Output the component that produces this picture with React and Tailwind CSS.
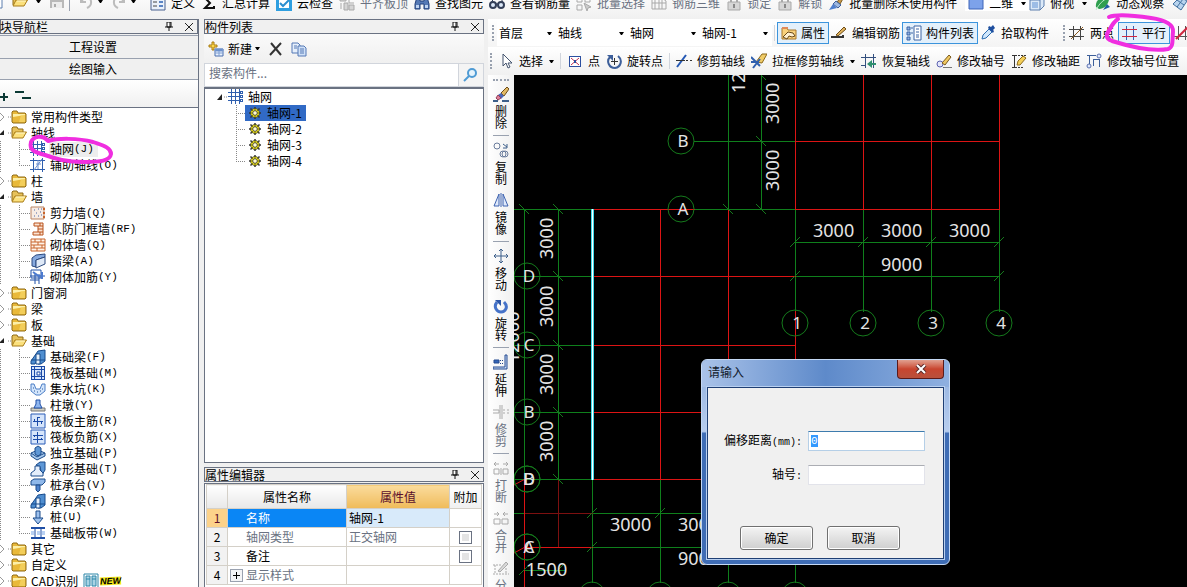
import React, { useEffect, useRef } from 'react';

const B = '#2f5fae';
const G = '#a9a9a9';

const icons = {
  folder: (
    <>
      <path d="M1 4V3l1-1h4l1 2h7l1 1v8l-1 1H2l-1-1z" fill="#e9b93a" stroke="#8f6a14" />
      <path d="M2 5h12v1L2 8z" fill="#fdf0a8" />
      <path d="M10 6h4v7H8z" fill="#f7d768" opacity=".7" />
    </>
  ),
  folderOpen: (
    <>
      <path d="M1 12V3l1-1h4l1 2h5v3" fill="#e7c25a" stroke="#8f6a14" />
      <path d="M1 13 4 7h11.5L12 13z" fill="#fbe07c" stroke="#a87c18" />
      <path d="M5 8h9" stroke="#fff7c8" />
    </>
  ),
  file: <path d="M2 1h9l3 3v11H2z" fill="#fff" stroke="#5c7fae" />,
  save: (
    <>
      <path d="M1 1h13l1 1v13H1z" fill="#b9b9b9" />
      <path d="M4 1h8v5H4zM3 9h10v6H3z" fill="#ececec" />
      <path d="M5 11h2v3H5z" fill="#aaa" />
    </>
  ),
  undo: <path d="M3 4v5h5M3 9c3-6 11-5 10 1 0 2-2 4-4 5" fill="none" stroke="#bcbcbc" strokeWidth="2" />,
  redo: <path d="M13 4v5H8M13 9C10 3 2 4 3 10c0 2 2 4 4 5" fill="none" stroke="#bcbcbc" strokeWidth="2" />,
  define: (
    <>
      <path d="M1 1h14v14H1z" fill="#eaf1fb" stroke="#48618f" />
      <path d="M1 1h14v3H1z" fill="#5b84c4" />
      <path d="M3 7h4M3 11h4" stroke="#444" />
      <path d="M9 6h4v2H9zM9 10h4v2H9z" fill="#5b84c4" />
    </>
  ),
  sum: <path d="M12 3H4l5 5-5 5h9v-2" fill="none" stroke="#111" strokeWidth="2" />,
  cloud: (
    <>
      <path d="M0 0h16v16H0z" fill="#2f9fe0" />
      <path d="M3 2h10v11H3z" fill="#fff" />
      <path d="m4 8 3 3 6-6" fill="none" stroke="#2b8fd0" strokeWidth="2" />
    </>
  ),
  slab: (
    <>
      <path d="M1 2h6v4H1zM5 8h4v7H5zM10 10h5v5h-5z" fill="#d5d5d5" stroke={G} />
      <path d="M10 3v5h5M2 8v6" fill="none" stroke={G} />
    </>
  ),
  binoculars: (
    <>
      <path d="M3 2h3v4h4V2h3l2 7v5h-5V9H6v5H1V9z" fill="#5579b5" stroke="#23407a" />
      <path d="M2 10h3v3H2zM11 10h3v3h-3z" fill="#bfd4f2" />
    </>
  ),
  glasses: (
    <>
      <circle cx="4" cy="10" r="3" fill="#dce8f8" stroke="#333f58" strokeWidth="2" />
      <circle cx="12" cy="10" r="3" fill="#dce8f8" stroke="#333f58" strokeWidth="2" />
      <path d="M7 9h2M2 8l3-5M14 8l-2-5" stroke="#333f58" />
    </>
  ),
  batch: (
    <>
      <path d="M1 2h5v5H1zM9 2h5v5H9zM1 10h5v5H1z" fill="none" stroke={G} />
      <path d="m8 8 7 4-3 1-1 3z" fill="#ccc" stroke={G} />
    </>
  ),
  rebar3d: <path d="M1 3h10v11H1zM4 3v11M8 3v11M1 8h14M11 3l4 3v8h-4" fill="none" stroke={G} />,
  lock: (
    <>
      <path d="M5 7V4c0-3 6-3 6 0v3" fill="none" stroke={G} strokeWidth="2" />
      <path d="M2 7h12v8H2z" fill="#d6d6d6" stroke={G} />
      <path d="M8 9v4" stroke="#888" strokeWidth="2" />
    </>
  ),
  brush: (
    <>
      <path d="m9 7 5-6 2 1-4 7z" fill="#c99a4a" stroke="#7b5a20" />
      <path d="M8 6l5 4-3 3-5-4z" fill="#9db8e2" stroke="#3e5f9a" />
      <path d="M5 9l4 4-8 2z" fill="#4f7fcf" />
    </>
  ),
  square: <path d="M1 2h14v12H1z" fill="#7da2ea" stroke="#3f64b8" />,
  cube: (
    <>
      <path d="M1 5 5 1h10v10l-4 4H1z" fill="#dbe9f8" stroke="#5c7fae" />
      <path d="M1 5h10v10M11 5l4-4" fill="none" stroke="#5c7fae" />
      <path d="M3 7h6v6H3z" fill="#9dbde6" />
    </>
  ),
  orbit: (
    <>
      <path d="M1 12C0 5 6 1 14 1c1 7-4 13-10 13z" fill="#2f9f4f" />
      <path d="M1 15C4 9 8 5 13 3" stroke="#bfeccb" fill="none" />
      <path d="m8 15 4-6 3 3z" fill="#1f5f9f" />
    </>
  ),
  diamond: <path d="M1 9 8 2l7 4-6 9zM5 5l7 5M11 4 5 12" fill="#b8d4ee" stroke="#3f6f9f" />,
  axis: (
    <>
      <g fill={B}>
        <path d="M3 0h1v15H3zM7 0h1v15H7zM11 0h1v15h-1zM0 3h12v1H0zM0 7h12v1H0zM0 11h12v1H0z" />
        <path d="M12 2h3v3h-3zM12 6h3v3h-3zM12 10h3v3h-3z" />
      </g>
      <path d="M13 3h1v1h-1zM13 7h1v1h-1zM13 11h1v1h-1z" fill="#fff" />
    </>
  ),
  axisAux: (
    <>
      <path d="M3 1h1v14H3zM12 1h1v14h-1zM0 3h15v1H0zM0 12h15v1H0z" fill={B} />
      <path d="m4 13 8-11M8 3v9M6 7h5" stroke="#6a8fd0" />
    </>
  ),
  gear: (
    <>
      <path d="M8 0v16M0 8h16M2 2l12 12M14 2 2 14" stroke="#333" strokeWidth="2" />
      <circle cx="8" cy="8" r="6" fill="#f2e61a" stroke="#333" />
      <path d="M8 2v12M2 8h12M4 4l8 8M12 4l-8 8" stroke="#5a5610" />
      <circle cx="8" cy="8" r="3" fill="#fffbd0" stroke="#333" />
    </>
  ),
  shearWall: (
    <>
      <path d="M1 2h13v12H1z" fill="#f7ece4" stroke="#b98464" />
      <path d="M4 5h1M8 4h1M6 8h1M10 7h1M4 11h1M8 11h1M11 10h1M11 4h1" stroke="#4b66a8" />
      <path d="M14 3v11" stroke="#c8642c" strokeWidth="2" strokeDasharray="2 2" />
    </>
  ),
  doorWall: (
    <>
      <path d="M4 2h9v12H3v-3h5V5H4z" fill="#fbe3d2" stroke="#b9521c" />
      <path d="M8 5h5M8 8h5M8 11h5M10 2v3M10 11v3" stroke="#b9521c" />
    </>
  ),
  brick: (
    <>
      <path d="M1 2h14v12H1z" fill="#fff3e8" stroke="#c8642c" />
      <path d="M1 5h14M1 8h14M1 11h14M5 2v3M11 2v3M8 5v3M4 8v3M12 8v3M7 11v3" stroke="#c8642c" />
    </>
  ),
  hiddenBeam: (
    <>
      <path d="m2 5 4-3 9-1v3L6 7v7l-4-1z" fill="#86a9de" stroke="#2c4a80" />
      <path d="m6 7 9-3v7l-9 4z" fill="#dfe9f7" stroke="#2c4a80" />
    </>
  ),
  masonryBar: (
    <>
      <path d="M1 1h10v8H1zM5 5v10M9 5v10M0 7h15M0 11h9" fill="none" stroke="#1f4fa6" />
      <path d="M12 3v7M3 3l7 5" stroke="#4b7ad0" strokeWidth="2" />
    </>
  ),
  beam: (
    <>
      <path d="m1 12 7-10 7-1v11l-4 3H8V9L5 15H1z" fill="#4f8ed0" stroke="#174a8c" />
      <path d="M6 5h4v10H6zM1 11h14" fill="#e8f2fc" stroke="#174a8c" />
    </>
  ),
  raft: (
    <>
      <path d="M1 1h14v14H1z" fill="#1a4aa8" />
      <path d="M2 2h2v2H2zM5 2h6v2H5zM12 2h2v2h-2zM2 5h2v6H2zM12 5h2v6h-2zM2 12h2v2H2zM5 12h6v2H5zM12 12h2v2h-2zM5 5h6v6H5z" fill="#d6e5fb" />
      <path d="M7 7h3v3H7z" fill="#fff" stroke="#1a4aa8" />
    </>
  ),
  sump: (
    <>
      <path d="M1 3h3l2 5h4l2-5h3v7l-5 4H6l-5-4z" fill="#d3e5fb" stroke="#4d7fc6" />
      <path d="M4 10h1M7 11h1M10 10h1M12 8h1M3 7h1" stroke="#25569c" />
    </>
  ),
  pier: (
    <>
      <path d="M1 11h14v3H1z" fill="#cfcfc4" stroke="#777" />
      <path d="M6 3h4v4l2 4H4l2-4z" fill="#8fb6ee" stroke="#1f4fa6" />
    </>
  ),
  raftMain: (
    <>
      <path d="M1 1h14v14H1z" fill="#d6e5fb" stroke="#2a5cb8" />
      <path d="M3 8h10v1H3zM7 4h1v9H7zM4 6h1v3H4zM11 8h1v3h-1zM8 4h2v1H8z" fill="#1a4aa8" />
    </>
  ),
  raftNeg: (
    <>
      <path d="M1 1h14v14H1z" fill="#d6e5fb" stroke="#2a5cb8" />
      <path d="M3 6h10v1H3zM3 10h10v1H3zM7 3h1v11H7zM4 6h1v2H4zM11 9h1v2h-1z" fill="#1a4aa8" />
    </>
  ),
  pad: (
    <>
      <path d="m1 8 7-3 7 3v3l-8 4-6-4z" fill="#a9cbef" stroke="#1d4d8c" />
      <path d="M5 3l3-2 3 2v6l-3 2-3-2z" fill="#5e97d6" stroke="#1d4d8c" />
      <path d="m1 8 6 4 8-4" fill="none" stroke="#1d4d8c" />
    </>
  ),
  strip: (
    <>
      <path d="m6 4 4-3h5v8l-3 5-2-8z" fill="#5e97d6" stroke="#1d4d8c" />
      <path d="M5 5h5v4l3 3v3H1v-3l4-3z" fill="#e4eefb" stroke="#1d4d8c" />
    </>
  ),
  pileCap: (
    <>
      <path d="m1 4 3-2h11v3l-3 3H1z" fill="#8fb8ea" stroke="#1d4d8c" />
      <path d="M6 8h4v5l-2 2-2-2z" fill="#4f83cc" stroke="#1d4d8c" />
    </>
  ),
  pile: (
    <>
      <path d="M6 2h4v7h3l-5 6-5-6h3z" fill="#9fc2ee" stroke="#1d4d8c" />
      <path d="M6 9h4" stroke="#1d4d8c" />
    </>
  ),
  band: (
    <>
      <path d="M1 3h14M1 13h14" stroke="#1f4fa6" strokeWidth="2" />
      <path d="M5 3v10M11 3v10" stroke="#1f4fa6" />
      <path d="M1 6h3v4H1zM7 6h3v4H7zM12 6h3v4h-3z" fill="#b9d1f3" />
    </>
  ),
  cad: (
    <>
      <path d="M1 1h14v14H1z" fill="#fff" stroke="#2d86a8" />
      <path d="M3 3h4v10H3zM9 3h4v10H9z" fill="#a7d3e4" stroke="#2d86a8" />
      <path d="M3 6h4M9 6h4" stroke="#2d86a8" />
    </>
  ),
  create: (
    <>
      <path d="M4 1h2v3h3v2H6v3H4V6H1V4h3z" fill="#fbd64a" stroke="#a87a10" />
      <path d="M7 8h8v7H7z" fill="#e9f1fc" stroke="#4b6fae" />
      <path d="M7 8h8v2H7zM7 12h8M11 10v5" fill="#5b84c4" stroke="#7f9fd4" />
    </>
  ),
  remove: <path d="M3 2l10 12M13 2 2 14" stroke="#333" strokeWidth="2" />,
  copyDoc: (
    <>
      <path d="M1 2h6l2 2v8H1z" fill="#e6effb" stroke="#5579b5" />
      <path d="M7 5h6l2 2v8H7z" fill="#cfe0f7" stroke="#5579b5" />
      <path d="M9 8h4M9 10h4M9 12h4M3 5h3M3 7h3" stroke="#5579b5" />
    </>
  ),
  search: (
    <>
      <circle cx="9" cy="6" r="4" fill="#e6f4fd" stroke="#4f9bd4" strokeWidth="2" />
      <path d="m6 9-5 5" stroke="#4f9bd4" strokeWidth="2" />
    </>
  ),
  props: (
    <>
      <path d="M1 3h5l1 2h8v9H1z" fill="#f9d27c" stroke="#a8762a" />
      <path d="M1 2h6v2H1z" fill="#e08a5a" />
      <path d="m2 12 5-5 5 1 2 3-3 1-3-1-2 3z" fill="#fff0d0" stroke="#6a4a18" />
    </>
  ),
  editRebar: (
    <>
      <path d="M0 12h12v-2" fill="none" stroke="#333" strokeWidth="2" />
      <path d="m5 10 8-8 2 2-8 7z" fill="#e0b25c" stroke="#6d4c18" />
    </>
  ),
  list: (
    <>
      <path d="M1 2h3v3H1zM1 7h3v3H1zM1 12h3v3H1z" fill="#8fb1e4" stroke="#3d64a4" />
      <path d="M8 1h7v14H8z" fill="#fff" stroke="#3d64a4" />
      <path d="M10 4h3M10 7h3M10 10h3M10 12h3M5 3h2M5 8h2" stroke="#3d64a4" />
    </>
  ),
  picker: (
    <>
      <path d="m2 14 1-4 6-6 3 3-6 6z" fill="#cfe6fb" stroke="#2d6db0" />
      <path d="m8 3 5 5 1-2-1-1 2-2-2-3-2 2-2-1z" fill="#1f4f9f" />
    </>
  ),
  twoPoint: (
    <>
      <path d="M4 1h1v14H4zM11 1h1v14h-1zM0 4h15v1H0zM0 11h15v1H0z" fill="#444" />
      <path d="M2 14 14 2" stroke="#8a5a20" />
    </>
  ),
  parallel: (
    <>
      <path d="M4 1h1v14H4zM11 1h1v14h-1z" fill="#355fb0" />
      <path d="M0 4h15v1H0zM0 11h15v1H0z" fill="#d02840" />
    </>
  ),
  angle: (
    <>
      <path d="M4 1h1v14H4zM0 11h15v1H0zM11 1h1v14h-1z" fill="#555" />
      <path d="M2 14 14 2" stroke="#d02840" strokeWidth="2" />
    </>
  ),
  pointer: <path d="M5 1v12l3-3 2 5 2-1-2-4h4z" fill="#fff" stroke="#44546e" />,
  point: (
    <>
      <path d="M2 3h12v11H2z" fill="#2b4fa0" />
      <path d="M3 4h10v9H3z" fill="#fff" />
      <path d="m4 5 8 7M12 5l-8 7" stroke="#c03050" />
      <path d="M7 7h2v3H7z" fill="#2b4fa0" />
    </>
  ),
  rotatePoint: (
    <>
      <path d="M4 4C0 8 3 15 9 15c6-1 8-8 3-12" fill="none" stroke="#3d5f9a" strokeWidth="2" />
      <path d="M1 2h6v6z" fill="#3d5f9a" />
      <path d="M8 5h1v7H8zM5 8h7v1H5z" fill="#333" />
    </>
  ),
  trimAxis: (
    <>
      <path d="M1 14 10 2" stroke="#2458b4" strokeWidth="2" />
      <path d="M0 7h9v1H0zM10 7h2v1h-2zM14 7h2v1h-2z" fill="#333" />
    </>
  ),
  frameTrim: (
    <>
      <path d="m5 9 6-8h5l-5 9z" fill="#f0cc68" stroke="#8d6a1c" />
      <path d="M0 4l9 9M2 15l7-9M0 9h8" stroke="#2f5fae" strokeWidth="2" />
    </>
  ),
  restore: (
    <>
      <path d="M4 1h1v14H4zM12 1h1v14h-1zM0 4h15v1H0zM0 12h5v1H0z" fill="#34507f" />
      <path d="m6 11 5-4v3h4v2h-4v3z" fill="#2f8f6f" />
    </>
  ),
  editNo: (
    <>
      <circle cx="4" cy="11" r="3" fill="#e4e6fb" stroke="#5c62b0" />
      <path d="m6 10 7-8 2 2-6 8z" fill="#f0c860" stroke="#7b5a20" />
      <path d="M7 14h9v1H7z" fill="#777" />
    </>
  ),
  editDist: (
    <>
      <path d="M1 2h5v1H1zM3 2h1v12H3zM1 14h5v1H1zM7 2h2v1H7zM10 2h2v1h-2zM13 2h2v1h-2zM7 14h2v1H7zM10 14h2v1h-2z" fill="#333" />
      <path d="m6 12 1-4 5-5 3 2-6 7z" fill="#f4cf58" stroke="#8d6a1c" />
    </>
  ),
  editPos: (
    <>
      <circle cx="13" cy="3" r="2" fill="#dfe6fb" stroke="#5c72b0" />
      <circle cx="3" cy="13" r="2" fill="#dfe6fb" stroke="#5c72b0" />
      <path d="M1 2h9v1H1zM3 2h1v9H3zM7 6h7v1H7zM7 6h1v7H7zM13 6h1v8h-1z" fill="#3d5f9a" />
    </>
  ),
  erase: (
    <>
      <path d="m8 7 6-6 2 2-5 7z" fill="#e2b964" stroke="#6d4c18" />
      <path d="m5 9 3-2 3 3-3 3z" fill="#4b66b8" />
      <path d="m3 12 2-3 3 3-3 2z" fill="#e27f9a" stroke="#92415a" />
      <path d="M0 15h5M9 15h7" stroke="#3d5f8a" strokeWidth="2" />
    </>
  ),
  copy: (
    <>
      <circle cx="4" cy="4" r="3" fill="none" stroke="#6a7c9c" />
      <path d="m10 2 4 3M14 2v4h-4" fill="none" stroke="#3d5f8a" />
      <circle cx="10" cy="12" r="3" fill="none" stroke="#6a7c9c" />
      <circle cx="12" cy="12" r="3" fill="none" stroke="#6a7c9c" />
    </>
  ),
  mirror: (
    <>
      <path d="M6 2v12H1zM10 2v12h5z" fill="#dfe9fb" stroke="#3d62b0" />
      <path d="M8 1v14" stroke="#3d62b0" />
    </>
  ),
  move: <path d="M8 1v14M1 8h14M6 3l2-2 2 2M6 13l2 2 2-2M3 6 1 8l2 2M13 6l2 2-2 2" fill="none" stroke="#3d5f8a" />,
  rotate: (
    <>
      <path d="M4 4C0 9 4 14 8 14s8-5 3-10" fill="none" stroke="#4572c8" strokeWidth="3" />
      <path d="M2 2h6v6z" fill="#2c56a8" />
    </>
  ),
  extend: (
    <>
      <path d="M1 6h5v3H1z" fill="#3566b8" stroke="#244a90" />
      <path d="M7 6h1v1H7zM9 6h1v1H9zM7 9h1v1H7zM9 9h1v1H9z" fill="#244a90" />
      <path d="M12 1h2v14H0v-2h12z" fill="#c9dbf6" stroke="#244a90" />
    </>
  ),
  trim: <path d="M7 1v14M9 1v14M0 6h6v3H0M10 6h2M14 6h2M10 9h2M14 9h2" fill="none" stroke={G} />,
  split: <path d="M1 9h5v5H1zM10 9h5v5h-5zM6 4H1l2-2M1 4l2 2M10 4h5l-2-2M15 4l-2 2M8 8v7" fill="none" stroke={G} />,
  merge: <path d="M1 9h6v5H1zM9 9h6v5H9zM1 4h5L4 2M6 4 4 6M15 4h-5l2-2M10 4l2 2" fill="none" stroke={G} />,
  divide: (
    <>
      <path d="M0 5h9M0 14h16M2 5v9M13 8v6" stroke={G} strokeDasharray="2 1" />
      <path d="m5 11 8-9 2 2-8 8z" fill="#d8d8d8" stroke={G} />
    </>
  ),
};

const Icon = ({ name, className = 'size-4' }) => (
  <svg viewBox="0 0 16 16" className={`${className} shrink-0`} aria-hidden="true">{icons[name]}</svg>
);

const Caret = ({ className = '' }) => (
  <svg viewBox="0 0 5 3" className={`h-[3px] w-[5px] shrink-0 ${className}`} aria-hidden="true">
    <path d="M0 0h5L3 3H2z" fill="#000" />
  </svg>
);

const Sep = () => <span className="h-4 w-px shrink-0 bg-gray-300" />;

const Grip = () => <span className="h-4 w-0 shrink-0 border-l-2 border-dotted border-gray-400" />;

const Tool = ({ icon, label, disabled, active }) => (
  <button
    type="button"
    disabled={disabled}
    className={`flex shrink-0 items-center whitespace-nowrap ${active ? 'h-[22px] gap-1 border border-[#3c94dc] bg-[#e3f0fb] px-[3px]' : 'h-4 gap-[5px]'} ${disabled ? 'text-gray-500' : ''}`}
  >
    <Icon name={icon} />
    {label}
  </button>
);

const mainTools = [
  { icon: 'define', label: '定义' },
  { icon: 'sum', label: '汇总计算' },
  { icon: 'cloud', label: '云检查' },
  { icon: 'slab', label: '平齐板顶', disabled: true },
  { icon: 'binoculars', label: '查找图元' },
  { icon: 'glasses', label: '查看钢筋量' },
  { icon: 'batch', label: '批量选择', disabled: true },
  { icon: 'rebar3d', label: '钢筋三维', disabled: true },
  { icon: 'lock', label: '锁定', disabled: true },
  { icon: 'lock', label: '解锁', disabled: true },
  { icon: 'brush', label: '批量删除未使用构件' },
];

const MainToolbar = () => (
  <header className="flex h-[19px] shrink-0 items-end overflow-hidden bg-linear-to-b from-[#fafafa] to-[#f0f0f0] pb-2">
    <div className="flex w-[150px] shrink-0 items-center">
      <Icon name="file" className="-ml-3 size-4" />
      <Icon name="folderOpen" className="ml-2 size-4" />
      <Caret className="ml-2" />
      <Icon name="save" className="ml-2 size-4" />
      <span className="ml-1 h-5 w-px bg-gray-400" />
      <Icon name="undo" className="ml-2 size-4" />
      <Caret className="ml-1" />
      <Icon name="redo" className="ml-2 size-4" />
      <Caret className="ml-1" />
    </div>
    <div className="flex shrink-0 items-center gap-[6px]">
      {mainTools.map((t) => <Tool key={t.label} {...t} />)}
    </div>
    <div className="ml-2 flex shrink-0 items-center gap-2 bg-white px-[3px]">
      <Tool icon="square" label="二维" />
      <Caret />
    </div>
    <div className="flex shrink-0 items-center gap-2">
      <Tool icon="cube" label="俯视" />
      <Caret />
      <Tool icon="orbit" label="动态观察" />
      <Icon name="diamond" />
    </div>
  </header>
);

const PanelTitle = ({ title, clipped }) => (
  <div className="flex h-[15px] shrink-0 items-center border border-gray-500 bg-[#f0f0f0] leading-[13px]">
    <h2 className={`flex-1 whitespace-nowrap ${clipped ? '-ml-px' : ''}`}>{title}</h2>
    <button type="button" aria-label="固定" className="mr-3">
      <svg viewBox="0 0 8 9" className="h-[9px] w-2"><path d="M2 0h4v5H2zM0 5h8M4 5v4M5 0v5" fill="#fff" stroke="#111" /></svg>
    </button>
    <button type="button" aria-label="关闭" className="mr-1">
      <svg viewBox="0 0 8 8" className="size-2"><path d="m0 0 8 8M8 0 0 8" stroke="#222" /></svg>
    </button>
  </div>
);

const componentTree = [
  { label: '常用构件类型' },
  {
    label: '轴线',
    items: [
      { icon: 'axis', label: '轴网', hotkey: '(J)', selected: true },
      { icon: 'axisAux', label: '辅助轴线', hotkey: '(O)' },
    ],
  },
  { label: '柱' },
  {
    label: '墙',
    items: [
      { icon: 'shearWall', label: '剪力墙', hotkey: '(Q)' },
      { icon: 'doorWall', label: '人防门框墙', hotkey: '(RF)' },
      { icon: 'brick', label: '砌体墙', hotkey: '(Q)' },
      { icon: 'hiddenBeam', label: '暗梁', hotkey: '(A)' },
      { icon: 'masonryBar', label: '砌体加筋', hotkey: '(Y)' },
    ],
  },
  { label: '门窗洞' },
  { label: '梁' },
  { label: '板' },
  {
    label: '基础',
    items: [
      { icon: 'beam', label: '基础梁', hotkey: '(F)' },
      { icon: 'raft', label: '筏板基础', hotkey: '(M)' },
      { icon: 'sump', label: '集水坑', hotkey: '(K)' },
      { icon: 'pier', label: '柱墩', hotkey: '(Y)' },
      { icon: 'raftMain', label: '筏板主筋', hotkey: '(R)' },
      { icon: 'raftNeg', label: '筏板负筋', hotkey: '(X)' },
      { icon: 'pad', label: '独立基础', hotkey: '(P)' },
      { icon: 'strip', label: '条形基础', hotkey: '(T)' },
      { icon: 'pileCap', label: '桩承台', hotkey: '(V)' },
      { icon: 'beam', label: '承台梁', hotkey: '(F)' },
      { icon: 'pile', label: '桩', hotkey: '(U)' },
      { icon: 'band', label: '基础板带', hotkey: '(W)' },
    ],
  },
  { label: '其它' },
  { label: '自定义' },
  { label: 'CAD识别', isNew: true },
];

const Branch = ({ x, width, last, outer }) => (
  <svg width={width} height="16" className="shrink-0" shapeRendering="crispEdges" aria-hidden="true">
    <path
      d={`M${x} 0V${last ? 8 : 16}M${x} 8H${width}${outer ? 'M0 0V16' : ''}`}
      stroke="#888"
      strokeDasharray="1 1"
    />
  </svg>
);

const TreeFolder = ({ label, items, isNew }) => (
  <li>
    <div className="flex h-4 items-center">
      <svg width="11" height="16" className="shrink-0" aria-hidden="true">
        {items ? <path d="M4 5v5H-1z" fill="#222" /> : <path d="m0 4 4 4-4 4" fill="#fff" stroke="#999" />}
        <path d="M8 8h3" stroke="#888" strokeDasharray="1 1" />
      </svg>
      <Icon name={items ? 'folderOpen' : 'folder'} />
      <span className="ml-1 whitespace-nowrap">{label}</span>
      {isNew && (
        <>
          <Icon name="cad" className="ml-[5px] size-4" />
          <span className="ml-px -rotate-3 bg-[#f6ea1c] font-['Liberation_Sans'] text-[9px] leading-[8px] font-bold italic">NEW</span>
        </>
      )}
    </div>
    {items && (
      <ul>
        {items.map((item, i) => (
          <li key={item.label} className="flex h-4 items-center">
            <Branch x={19} width={30} last={i === items.length - 1} outer />
            <button type="button" className="flex h-4 items-center whitespace-nowrap">
              <Icon name={item.icon} />
              <span className={`ml-[3px] flex h-[15px] items-center pr-1 pl-px ${item.selected ? 'bg-[#ededed]' : ''}`}>
                {item.label}
                <span className="font-['Liberation_Mono'] text-[11px]">{item.hotkey}</span>
              </span>
            </button>
          </li>
        ))}
      </ul>
    )}
  </li>
);

const NavPanel = () => (
  <aside className="flex w-[199px] shrink-0 flex-col border-r border-gray-500">
    <PanelTitle title="块导航栏" clipped />
    <button type="button" className="mt-px h-6 shrink-0 border-y border-gray-400 bg-[#f0f0f0] pr-3">工程设置</button>
    <button type="button" className="h-[21px] shrink-0 border-b border-gray-400 bg-[#f0f0f0] pr-3">绘图输入</button>
    <div className="flex h-[27px] shrink-0 items-center bg-linear-to-b from-white to-[#f0f0f0] pt-1">
      <button type="button" aria-label="展开">
        <svg width="8" height="12" className="block"><path d="M0 7h8M4 3v8" stroke="#0c3a35" strokeWidth="2" /></svg>
      </button>
      <button type="button" aria-label="折叠" className="ml-[7px]">
        <svg width="16" height="12" className="block"><path d="M0 2h9M7 8h9" stroke="#0c3a35" strokeWidth="2" /></svg>
      </button>
    </div>
    <ul className="min-h-0 flex-1 overflow-hidden border-t border-gray-500 bg-white pt-px">
      {componentTree.map((f) => <TreeFolder key={f.label} {...f} />)}
    </ul>
  </aside>
);

const axisNets = ['轴网-1', '轴网-2', '轴网-3', '轴网-4'];

const ComponentList = () => (
  <section className="flex min-h-0 flex-1 flex-col">
    <PanelTitle title="构件列表" />
    <div className="flex h-[29px] shrink-0 items-center bg-linear-to-b from-[#fafafa] to-[#f0f0f0] pl-1">
      <button type="button" className="flex items-center gap-1"><Icon name="create" />新建<Caret className="-ml-px" /></button>
      <button type="button" aria-label="删除" className="ml-2"><Icon name="remove" /></button>
      <button type="button" aria-label="复制" className="ml-[7px]"><Icon name="copyDoc" /></button>
    </div>
    <div className="flex h-6 shrink-0 border border-gray-300 bg-[#f4f4f4]">
      <input
        type="text"
        aria-label="搜索构件"
        placeholder="搜索构件..."
        className="min-w-0 flex-1 border-r border-gray-300 bg-white px-1 pb-1 outline-none placeholder:text-gray-500"
      />
      <button type="button" aria-label="搜索" className="flex w-6 items-center justify-center"><Icon name="search" /></button>
    </div>
    <ul className="min-h-0 flex-1 border border-t-2 border-gray-500 bg-white">
      <li className="flex h-4 items-center">
        <svg width="23" height="16" className="shrink-0" aria-hidden="true">
          <path d="M17 5v6h-5z" fill="#222" />
          <path d="M19 8h4" stroke="#888" strokeDasharray="1 1" />
        </svg>
        <Icon name="axis" />
        <span className="ml-1">轴网</span>
      </li>
      {axisNets.map((name, i) => (
        <li key={name} className="flex h-4 items-center">
          <Branch x={31} width={40} last={i === axisNets.length - 1} />
          <button type="button" className={`flex h-4 items-center gap-[6px] px-1 ${i === 0 ? 'bg-[#316ac5]' : ''}`}>
            <Icon name="gear" className="size-3" />
            {name}
          </button>
        </li>
      ))}
    </ul>
  </section>
);

const properties = [
  { name: '名称', value: '轴网-1', selected: true },
  { name: '轴网类型', value: '正交轴网', check: true, dim: true },
  { name: '备注', value: '', check: true },
  { name: '显示样式', value: '', dim: true, expandable: true },
];

const PropertyEditor = () => (
  <section className="mt-1 flex h-[120px] shrink-0 flex-col overflow-hidden">
    <PanelTitle title="属性编辑器" />
    <div className="mt-px flex-1 border-x border-t border-gray-500 bg-white px-px">
      <table className="w-full table-fixed border-collapse">
        <thead>
          <tr className="h-6">
            <th className="w-[21px] border border-[#d4d0c8] bg-linear-to-b from-white to-[#e8e8e8]" aria-label="序号" />
            <th className="border border-[#d4d0c8] bg-linear-to-b from-white to-[#e8e8e8] font-normal">属性名称</th>
            <th className="w-[103px] border border-[#d4d0c8] bg-linear-to-b from-[#fbdc9c] to-[#efbb58] font-normal text-[#5b0f2c]">属性值</th>
            <th className="w-[32px] border border-[#d4d0c8] bg-linear-to-b from-white to-[#f0f0f0] p-0 font-normal whitespace-nowrap">附加</th>
          </tr>
        </thead>
        <tbody>
          {properties.map((p, i) => (
            <tr key={p.name} className={`h-[19px] ${p.dim ? 'text-gray-500' : ''}`}>
              <td className={`border border-[#d4d0c8] p-0 text-center ${p.selected ? 'bg-[#fcd28a] text-[#5b0f2c]' : 'bg-[#f2f2f2] text-black'}`}>{i + 1}</td>
              <td className={`border border-[#d4d0c8] p-0 ${p.selected ? 'bg-[#0a86f5] text-white' : ''}`}>
                <div className={`flex items-center ${p.expandable ? 'gap-[3px] pl-[2px]' : 'pl-[18px]'}`}>
                  {p.expandable && (
                    <button type="button" aria-label="展开" className="size-[13px] border border-gray-400 bg-gray-100 text-black">
                      <svg viewBox="0 0 11 11" className="block"><path d="M5 2h1v7H5zM2 5h7v1H2z" fill="#000" /></svg>
                    </button>
                  )}
                  {p.name}
                </div>
              </td>
              <td className={`border border-[#d4d0c8] py-0 pr-0 pl-[2px] ${p.selected ? 'bg-[#d8eafa]' : ''}`}>{p.value}</td>
              <td className="border border-[#d4d0c8] p-0">
                {p.check && (
                  <input type="checkbox" aria-label={`${p.name}附加`} className="mx-auto block size-[13px] appearance-none border border-gray-500 bg-[#e4e4e4] inset-ring-2 inset-ring-white" />
                )}
              </td>
            </tr>
          ))}
        </tbody>
      </table>
    </div>
  </section>
);

const Combo = ({ label, value, width }) => (
  <label className={`flex h-[26px] shrink-0 items-center bg-white pr-1 ${width}`}>
    <select aria-label={label} className="min-w-0 flex-1 appearance-none pl-[2px] outline-none">
      <option>{value}</option>
    </select>
    <Caret />
  </label>
);

const AxisToolbar = () => (
  <div className="flex h-7 shrink-0 items-center overflow-hidden bg-linear-to-b from-white to-[#f4f4f4] pl-1">
    <Grip />
    <Combo label="楼层" value="首层" width="ml-[3px] w-[59px]" />
    <Combo label="构件类型" value="轴线" width="w-[72px]" />
    <Combo label="构件" value="轴网" width="w-[72px]" />
    <Combo label="构件名称" value="轴网-1" width="w-[72px]" />
    <div className="ml-[2px] flex shrink-0 items-center gap-[2px]">
      <Sep />
      <Tool icon="props" label="属性" active />
      <Tool icon="editRebar" label="编辑钢筋" />
      <Tool icon="list" label="构件列表" active />
      <Tool icon="picker" label="拾取构件" />
    </div>
    <div className="ml-[14px] flex shrink-0 items-center gap-1">
      <Grip />
      <Tool icon="twoPoint" label="两点" />
      <Tool icon="parallel" label="平行" active />
      <Icon name="angle" />
    </div>
  </div>
);

const EditToolbar = () => (
  <div className="flex h-7 shrink-0 items-center gap-[6px] overflow-hidden bg-linear-to-b from-white to-[#f0f0f0] pl-[2px]">
    <Grip />
    <Tool icon="pointer" label="选择" />
    <Caret />
    <Sep />
    <Tool icon="point" label="点" />
    <Tool icon="rotatePoint" label="旋转点" />
    <Sep />
    <Tool icon="trimAxis" label="修剪轴线" />
    <Tool icon="frameTrim" label="拉框修剪轴线" />
    <Caret />
    <Tool icon="restore" label="恢复轴线" />
    <Tool icon="editNo" label="修改轴号" />
    <Tool icon="editDist" label="修改轴距" />
    <Tool icon="editPos" label="修改轴号位置" />
  </div>
);

const sideGroups = [
  [{ icon: 'erase', label: '删除' }],
  [{ icon: 'copy', label: '复制' }, { icon: 'mirror', label: '镜像' }],
  [{ icon: 'move', label: '移动' }, { icon: 'rotate', label: '旋转' }],
  [{ icon: 'extend', label: '延伸' }, { icon: 'trim', label: '修剪', disabled: true }],
  [
    { icon: 'split', label: '打断', disabled: true },
    { icon: 'merge', label: '合并', disabled: true },
    { icon: 'divide', label: '分割', disabled: true },
  ],
];

const SideToolbar = () => (
  <div className="flex w-[26px] shrink-0 flex-col items-center overflow-hidden bg-linear-to-r from-white to-[#f0f0f0] pt-1">
    <span className="mb-[5px] h-0 w-4 shrink-0 border-t-2 border-dotted border-gray-400" />
    {sideGroups.map((group) => (
      <div key={group[0].label} className="mb-[6px] flex shrink-0 flex-col gap-[7px] border-b border-gray-400 pb-[6px]">
        {group.map((t) => (
          <button key={t.label} type="button" disabled={t.disabled} className={`flex h-[43px] w-4 flex-col items-center gap-[3px] ${t.disabled ? 'text-gray-500' : ''}`}>
            <Icon name={t.icon} />
            <span className="w-3 leading-[12px] break-all">{t.label}</span>
          </button>
        ))}
      </div>
    ))}
  </div>
);

const greenLines = [
  [728, 75, 728, 209], [761, 75, 761, 209], [694, 141, 795, 141], [694, 209, 795, 209],
  [795, 209, 795, 311], [863, 209, 863, 311], [931, 209, 931, 311], [999, 209, 999, 311],
  [795, 242, 999, 242], [795, 276, 999, 276],
  [514, 209, 592, 209], [514, 276, 592, 276], [514, 345, 592, 345], [514, 412, 592, 412], [514, 479, 592, 479],
  [524, 209, 524, 479], [558, 209, 558, 479],
  [592, 479, 592, 582], [660, 479, 660, 582], [728, 479, 728, 582], [795, 479, 795, 582],
  [514, 513, 524, 513], [592, 513, 795, 513], [592, 547, 795, 547], [524, 570, 565, 570],
];

const redLines = [
  [795, 75, 795, 209], [863, 75, 863, 209], [931, 75, 931, 209], [999, 75, 999, 209],
  [795, 141, 999, 141], [795, 209, 999, 209], [592, 209, 694, 209],
  [592, 276, 795, 276], [592, 345, 795, 345], [592, 412, 795, 412], [592, 479, 795, 479],
  [660, 209, 660, 479], [728, 209, 728, 479], [795, 311, 795, 479],
  [524, 479, 524, 587], [524, 547, 592, 547],
];

const darkRedLines = [[558, 479, 558, 547], [524, 513, 592, 513]];

// ticks on vertical chains lean down, on horizontal chains up
const ticksDown = [
  [728, 209], [761, 75], [761, 141], [761, 209], [524, 209],
  [558, 209], [558, 276], [558, 345], [558, 412], [558, 479],
];
const ticksUp = [
  [795, 242], [863, 242], [931, 242], [999, 242], [795, 276], [999, 276],
  [592, 513], [660, 513], [592, 547], [524, 570], [558, 570],
];

const bubbles = [
  ['B', 681, 141], ['A', 681, 209], ['D', 527, 276], ['C', 527, 345], ['B', 527, 412],
  ['D', 527, 479], ['B', 527, 479], ['A', 527, 547], ['C', 527, 547],
  ['1', 795, 323], ['2', 863, 323], ['3', 931, 323], ['4', 999, 323],
  ['', 592, 595], ['', 660, 595], ['', 728, 595], ['', 795, 595],
];

const dims = [
  ['3000', 813, 237], ['3000', 881, 237], ['3000', 949, 237], ['9000', 881, 271],
  ['3000', 610, 531], ['3000', 678, 531], ['9000', 678, 565], ['1500', 526, 576],
];
const verticalDims = [
  ['3000', 779, 124], ['3000', 779, 191], ['12000', 745, 93],
  ['3000', 553, 259], ['3000', 553, 327], ['3000', 553, 395], ['3000', 553, 462], ['12000', 519, 363],
];

// one pixel wide bars, so that straight lines stay sharp
const toBars = (lines) =>
  lines.map(([x1, y1, x2, y2]) => `M${x1} ${y1}H${x2 + 1}V${y2 + 1}H${x1}z`).join('');
const toPath = (lines) => lines.map(([x1, y1, x2, y2]) => `M${x1} ${y1}L${x2} ${y2}`).join('');

const Drawing = () => (
  <svg className="block h-full w-full bg-black font-['Noto_Sans']" role="img" aria-label="轴网">
    <g transform="translate(-514 -75)">
      <path d={toBars(greenLines)} fill="#0f7f1c" />
      <path d={toBars(darkRedLines)} fill="#7c1010" />
      <path d={toBars(redLines)} fill="#dc1414" />
      <path d="M591 209h3v271h-3z" fill="#3fd8e8" />
      <path d="M592 209h1v271h-1z" fill="#fff" />
      <path d={toPath([[514, 485, 527, 478], [514, 553, 527, 546]])} stroke="#dc1414" />
      <g fill="none" stroke="#157a1c">
        <path d={toPath(ticksDown.map(([x, y]) => [x - 5, y - 5, x + 5, y + 5]))} />
        <path d={toPath(ticksUp.map(([x, y]) => [x - 5, y + 5, x + 5, y - 5]))} />
        {bubbles.map(([t, x, y]) => <circle key={`${t}${x}${y}`} cx={x} cy={y} r="13" />)}
      </g>
      <g fill="#e4e4e4" fontSize="17" textAnchor="middle">
        {bubbles.map(([t, x, y]) => <text key={`${t}${x}${y}`} x={x + 2} y={y + 6}>{t}</text>)}
      </g>
      <g fill="#e4e4e4" fontSize="18">
        {dims.map(([t, x, y]) => <text key={`${x}${y}`} x={x} y={y}>{t}</text>)}
        {verticalDims.map(([t, x, y]) => <text key={`${x}${y}`} transform={`translate(${x} ${y}) rotate(-90)`}>{t}</text>)}
      </g>
    </g>
  </svg>
);

const OffsetDialog = () => {
  const distance = useRef(null);

  useEffect(() => {
    distance.current.focus({ preventScroll: true });
    distance.current.select();
  }, []);

  return (
    <form
      role="dialog"
      aria-label="请输入"
      onSubmit={(e) => e.preventDefault()}
      className="absolute top-[284px] left-[187px] flex h-[206px] w-[249px] flex-col rounded-md border border-[#c4d8f4] bg-linear-to-b from-[#8eaedd] from-0% via-[#b7cdee] via-35% to-[#3f6db5] to-36% px-[5px] pb-[5px]"
    >
      <div className="-mx-[5px] flex h-[27px] shrink-0 items-start justify-between rounded-t-md bg-linear-to-r from-[#a9c2e8] via-[#5e8aca] to-[#8fb0e0] pr-[5px] pl-[6px]">
        <span className="pt-[5px] text-[#111a2c]">请输入</span>
        <button type="button" aria-label="关闭" className="flex h-[19px] w-[47px] items-center justify-center rounded-b border border-t-0 border-[#5a1a1a] bg-linear-to-b from-[#e0a090] from-0% via-[#c8452f] via-50% to-[#b8503c] to-100%">
          <svg viewBox="0 0 12 10" className="h-[10px] w-3"><path d="m2 1 8 8M10 1 2 9" stroke="#5b2a2a" strokeWidth="4" /><path d="m2 1 8 8M10 1 2 9" stroke="#fff" strokeWidth="2" /></svg>
        </button>
      </div>
      <div className="flex flex-1 flex-col border border-[#1f3f74] bg-[#f0f0f0] pt-[43px] outline outline-[#b9d0f0]">
        <div className="flex h-5 items-center justify-end gap-[6px] pr-[18px]">
          <label htmlFor="distance">偏移距离<span className="font-['Liberation_Mono'] text-[10px]">(mm):</span></label>
          <input id="distance" ref={distance} type="text" defaultValue="0" className="h-5 w-[117px] border border-[#b5cfe7] border-t-[#3d7bad] bg-white px-[2px] font-['Liberation_Mono'] text-[11px] outline-none selection:bg-[#3399ff] selection:text-white" />
        </div>
        <div className="mt-[14px] flex h-5 items-center justify-end gap-[6px] pr-[18px]">
          <label htmlFor="axisNo">轴号<span className="font-['Liberation_Mono'] text-[10px]">:</span></label>
          <input id="axisNo" type="text" className="h-5 w-[117px] border border-[#e2e3ea] border-t-[#abadb3] bg-white px-[2px] outline-none" />
        </div>
        <div className="mt-auto mb-2 flex gap-[14px] pl-8">
          <button type="submit" className="h-6 w-[73px] rounded-[3px] border border-[#707070] bg-linear-to-b from-[#f4f4f4] to-[#cfcfcf] inset-ring inset-ring-white">确定</button>
          <button type="button" className="h-6 w-[73px] rounded-[3px] border border-[#707070] bg-linear-to-b from-[#f4f4f4] to-[#cfcfcf] inset-ring inset-ring-white">取消</button>
        </div>
      </div>
    </form>
  );
};

const Markup = () => (
  <svg className="pointer-events-none absolute inset-0 h-full w-full" fill="none" stroke="#f02ee0" strokeWidth="4" strokeLinecap="round" strokeLinejoin="round" aria-hidden="true">
    <path d="M47 140C42 134 33 137 31 142C29 150 34 152 45 155C56 159 66 162 84 162C100 162 110 161 111 154C111 147 101 145 93 142C78 138 58 138 48 141" />
    <path d="M1109 17C1118 13 1138 16 1151 18C1166 20 1174 25 1173 32C1172 40 1174 47 1168 49C1152 52 1128 46 1112 41C1104 38 1107 33 1110 29C1112 25 1115 21 1118 19" />
  </svg>
);

const App = () => (
  <div className="relative flex h-screen flex-col overflow-hidden bg-[#f0f0f0] font-['Noto_Sans_CJK_SC',sans-serif] text-[12px] leading-[14px] text-black">
    <MainToolbar />
    <main className="flex min-h-0 flex-1">
      <NavPanel />
      <div className="ml-[5px] flex w-[280px] shrink-0 flex-col">
        <ComponentList />
        <PropertyEditor />
      </div>
      <div className="ml-1 flex min-w-0 flex-1 flex-col">
        <AxisToolbar />
        <EditToolbar />
        <div className="flex min-h-0 flex-1">
          <SideToolbar />
          <div className="relative min-w-0 flex-1 overflow-hidden">
            <Drawing />
            <OffsetDialog />
          </div>
        </div>
      </div>
    </main>
    <Markup />
  </div>
);

export default App;
